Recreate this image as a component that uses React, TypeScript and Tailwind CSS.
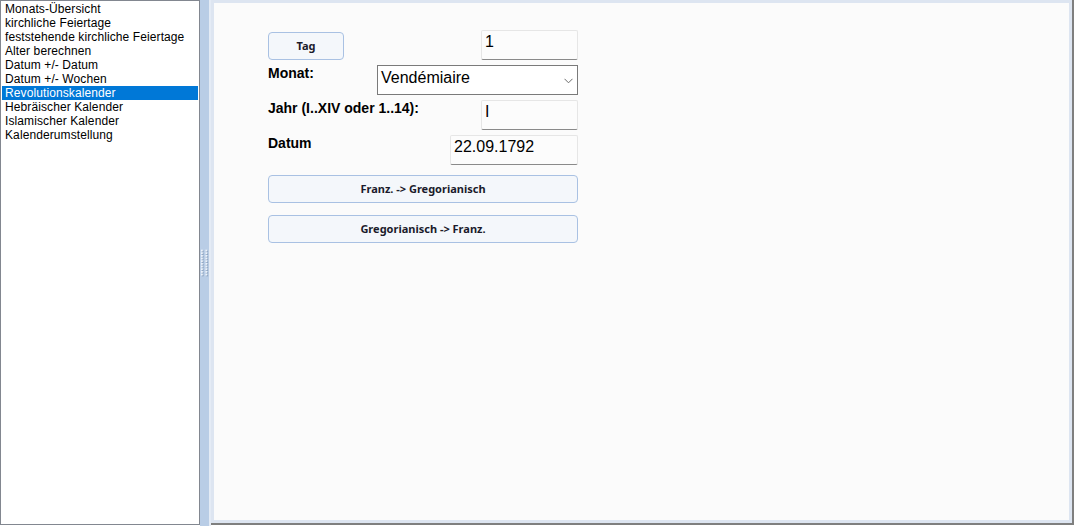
import React from "react"

const items = [
  "Monats-Übersicht",
  "kirchliche Feiertage",
  "feststehende kirchliche Feiertage",
  "Alter berechnen",
  "Datum +/- Datum",
  "Datum +/- Wochen",
  "Revolutionskalender",
  "Hebräischer Kalender",
  "Islamischer Kalender",
  "Kalenderumstellung",
]

const arial = { fontFamily: '"Liberation Sans", Arial, sans-serif' }
const uiFont = { fontFamily: '"Noto Sans", "Open Sans", sans-serif' }

function Grip() {
  const dots = []
  for (let r = 0; r < 10; r++) {
    for (let c = 0; c < 2; c++) {
      dots.push(
        <g key={`${r}-${c}`}>
          <rect x={c * 5 + 1} y={r * 3 + 1} width="2" height="2" fill="#8ea3bf" />
          <rect x={c * 5} y={r * 3} width="2" height="2" fill="#eef3fa" />
        </g>
      )
    }
  }
  return (
    <svg width="9" height="30" viewBox="0 0 9 30">
      {dots}
    </svg>
  )
}

function TextBox({ value, width }: { value: string; width: string }) {
  return (
    <div
      className={`${width} h-[30px] bg-[#fcfcfc] border border-[#e6e6e6] border-b-[#8a8a8a] rounded-[2px] px-[3px] pt-[1px] text-[16px] text-black leading-[20px]`}
      style={arial}
    >
      {value}
    </div>
  )
}

function Button({ label, className }: { label: string; className: string }) {
  return (
    <div
      className={`${className} h-[28px] flex items-center justify-center bg-[#f4f7fb] border border-[#a9c1e3] rounded-[4px] text-[11px] font-bold text-[#1b1b2b]`}
      style={uiFont}
    >
      {label}
    </div>
  )
}

export default function App() {
  return (
    <div className="w-[1074px] h-[526px] flex bg-white overflow-hidden">
      <div className="w-[200px] h-[525px] border border-[#828790] bg-white pt-[1px] px-[1px]" style={arial}>
        {items.map((item) => (
          <div
            key={item}
            className={`h-[14px] px-[3px] text-[12px] leading-[14px] tracking-[0.1px] ${
              item === "Revolutionskalender" ? "bg-[#0078d7] text-white" : "text-black"
            }`}
          >
            {item}
          </div>
        ))}
      </div>

      <div className="w-[9px] h-[526px] bg-[#b9cde6] flex items-center justify-center pl-[1px]">
        <Grip />
      </div>
      <div className="w-[2px] h-[526px] bg-[#e4ebf5]" />

      <div className="flex-1 h-[525px] border-r-2 border-b-2 border-[#7f7f7f]">
        <div className="h-full border-[3px] border-[#dde5f1] bg-[#fbfbfb] pl-[54px] pt-[27px]">
          <div className="w-[310px] flex flex-col">
            <div className="h-[30px] flex justify-between items-start">
              <Button label="Tag" className="w-[76px] mt-[2px]" />
              <TextBox value="1" width="w-[97px]" />
            </div>

            <div className="h-[30px] mt-[5px] flex justify-between items-start">
              <div className="text-[14px] font-bold text-black leading-[16px]" style={arial}>
                Monat:
              </div>
              <div
                className="w-[201px] h-[30px] bg-white border border-[#7a7a7a] flex items-center justify-between pl-[3px] pr-[4px]"
                style={arial}
              >
                <span className="text-[16px] text-black leading-[20px] -mt-[4px]">Vendémiaire</span>
                <svg width="9" height="6" viewBox="0 0 9 6" className="mt-[2px]">
                  <path d="M0.5 0.8 L4.5 4.8 L8.5 0.8" fill="none" stroke="#6d6d6d" strokeWidth="1" />
                </svg>
              </div>
            </div>

            <div className="h-[30px] mt-[5px] flex justify-between items-start">
              <div className="text-[14px] font-bold text-black leading-[16px]" style={arial}>
                Jahr (I..XIV oder 1..14):
              </div>
              <TextBox value="I" width="w-[97px]" />
            </div>

            <div className="h-[30px] mt-[5px] flex justify-between items-start">
              <div className="text-[14px] font-bold text-black leading-[16px]" style={arial}>
                Datum
              </div>
              <TextBox value="22.09.1792" width="w-[128px]" />
            </div>

            <Button label="Franz. -> Gregorianisch" className="w-[310px] mt-[10px]" />
            <Button label="Gregorianisch -> Franz." className="w-[310px] mt-[12px]" />
          </div>
        </div>
      </div>
    </div>
  )
}
